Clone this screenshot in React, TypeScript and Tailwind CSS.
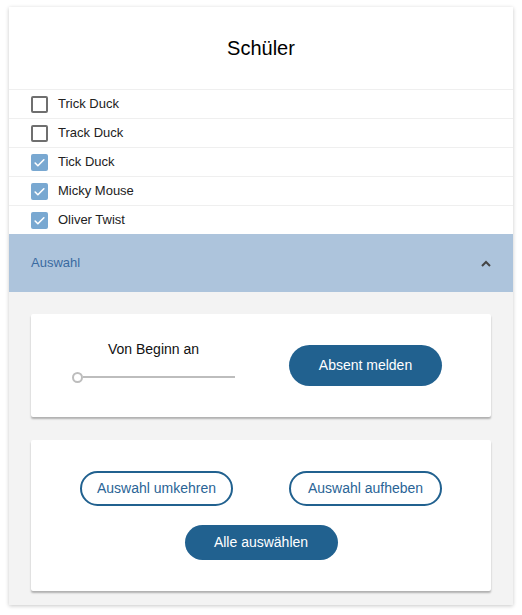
import { useState } from "react";

const students = [
  { name: "Trick Duck", checked: false },
  { name: "Track Duck", checked: false },
  { name: "Tick Duck", checked: true },
  { name: "Micky Mouse", checked: true },
  { name: "Oliver Twist", checked: true },
];

function Checkbox({ checked }: { checked: boolean }) {
  if (checked) {
    return (
      <span className="flex h-[17px] w-[17px] items-center justify-center rounded-[2px] bg-[#79a8d1]">
        <svg width="13" height="13" viewBox="0 0 24 24" fill="none" stroke="white" strokeWidth="3" strokeLinecap="round" strokeLinejoin="round">
          <path d="M4 13l5 5L20 7" />
        </svg>
      </span>
    );
  }
  return <span className="h-[17px] w-[17px] rounded-[2px] border-2 border-[#6f6f6f] bg-white" />;
}

export default function App() {
  const [list, setList] = useState(students);
  const [open, setOpen] = useState(true);

  const toggle = (i: number) =>
    setList((prev) => prev.map((s, idx) => (idx === i ? { ...s, checked: !s.checked } : s)));

  return (
    <div className="min-h-[615px] bg-white px-[9px] pt-[7px] font-['Liberation_Sans',Arial,sans-serif]">
      <div className="bg-white shadow-[0_1px_4px_rgba(0,0,0,0.22)]">
        {/* HEADER */}
        <div className="flex h-[82px] items-center justify-center">
          <h1 className="text-[20px] text-black">Schüler</h1>
        </div>

        {/* STUDENT LIST */}
        <div>
          {list.map((s, i) => (
            <div
              key={s.name}
              onClick={() => toggle(i)}
              className="flex h-[29px] cursor-pointer items-center gap-[10px] border-t border-[#efefef] pl-[22px]"
            >
              <Checkbox checked={s.checked} />
              <span className="text-[13px] text-[#222]">{s.name}</span>
            </div>
          ))}
        </div>

        {/* ACCORDION */}
        <button
          onClick={() => setOpen((o) => !o)}
          className="flex h-[58px] w-full items-center justify-between bg-[#adc4dc] pl-[22px] pr-[22px]"
        >
          <span className="text-[13px] text-[#3a6aa0]">Auswahl</span>
          <svg width="10" height="7" viewBox="0 0 10 7" fill="none" stroke="#444" strokeWidth="2">
            <path d={open ? "M1 6 L5 2 L9 6" : "M1 1 L5 5 L9 1"} />
          </svg>
        </button>

        {open && (
          <div className="flex flex-col gap-[23px] bg-[#f3f3f3] px-[22px] pb-[14px] pt-[22px]">
            <div className="flex h-[103px] items-center rounded-[2px] bg-white pl-[41px] shadow-[0_2px_2px_rgba(0,0,0,0.28)]">
              <div className="flex w-[163px] flex-col items-center pb-[10px]">
                <span className="text-[14px] text-[#111]">Von Beginn an</span>
                <div className="mt-[12px] flex w-full items-center">
                  <span className="h-[11px] w-[11px] shrink-0 rounded-full border-2 border-[#bdbdbd] bg-white" />
                  <span className="h-[2px] flex-1 bg-[#bdbdbd]" />
                </div>
              </div>
              <button className="ml-[54px] h-[41px] w-[153px] rounded-full bg-[#21618f] text-[14px] text-white">
                Absent melden
              </button>
            </div>

            <div className="flex h-[151px] flex-col items-center justify-center gap-[19px] rounded-[2px] bg-white shadow-[0_2px_2px_rgba(0,0,0,0.28)]">
              <div className="flex gap-[56px]">
                <button className="h-[35px] w-[153px] rounded-full border-2 border-[#21618f] text-[14px] text-[#2a6496]">
                  Auswahl umkehren
                </button>
                <button className="h-[35px] w-[153px] rounded-full border-2 border-[#21618f] text-[14px] text-[#2a6496]">
                  Auswahl aufheben
                </button>
              </div>
              <button className="h-[35px] w-[153px] rounded-full bg-[#21618f] text-[14px] text-white">
                Alle auswählen
              </button>
            </div>
          </div>
        )}
      </div>
    </div>
  );
}
